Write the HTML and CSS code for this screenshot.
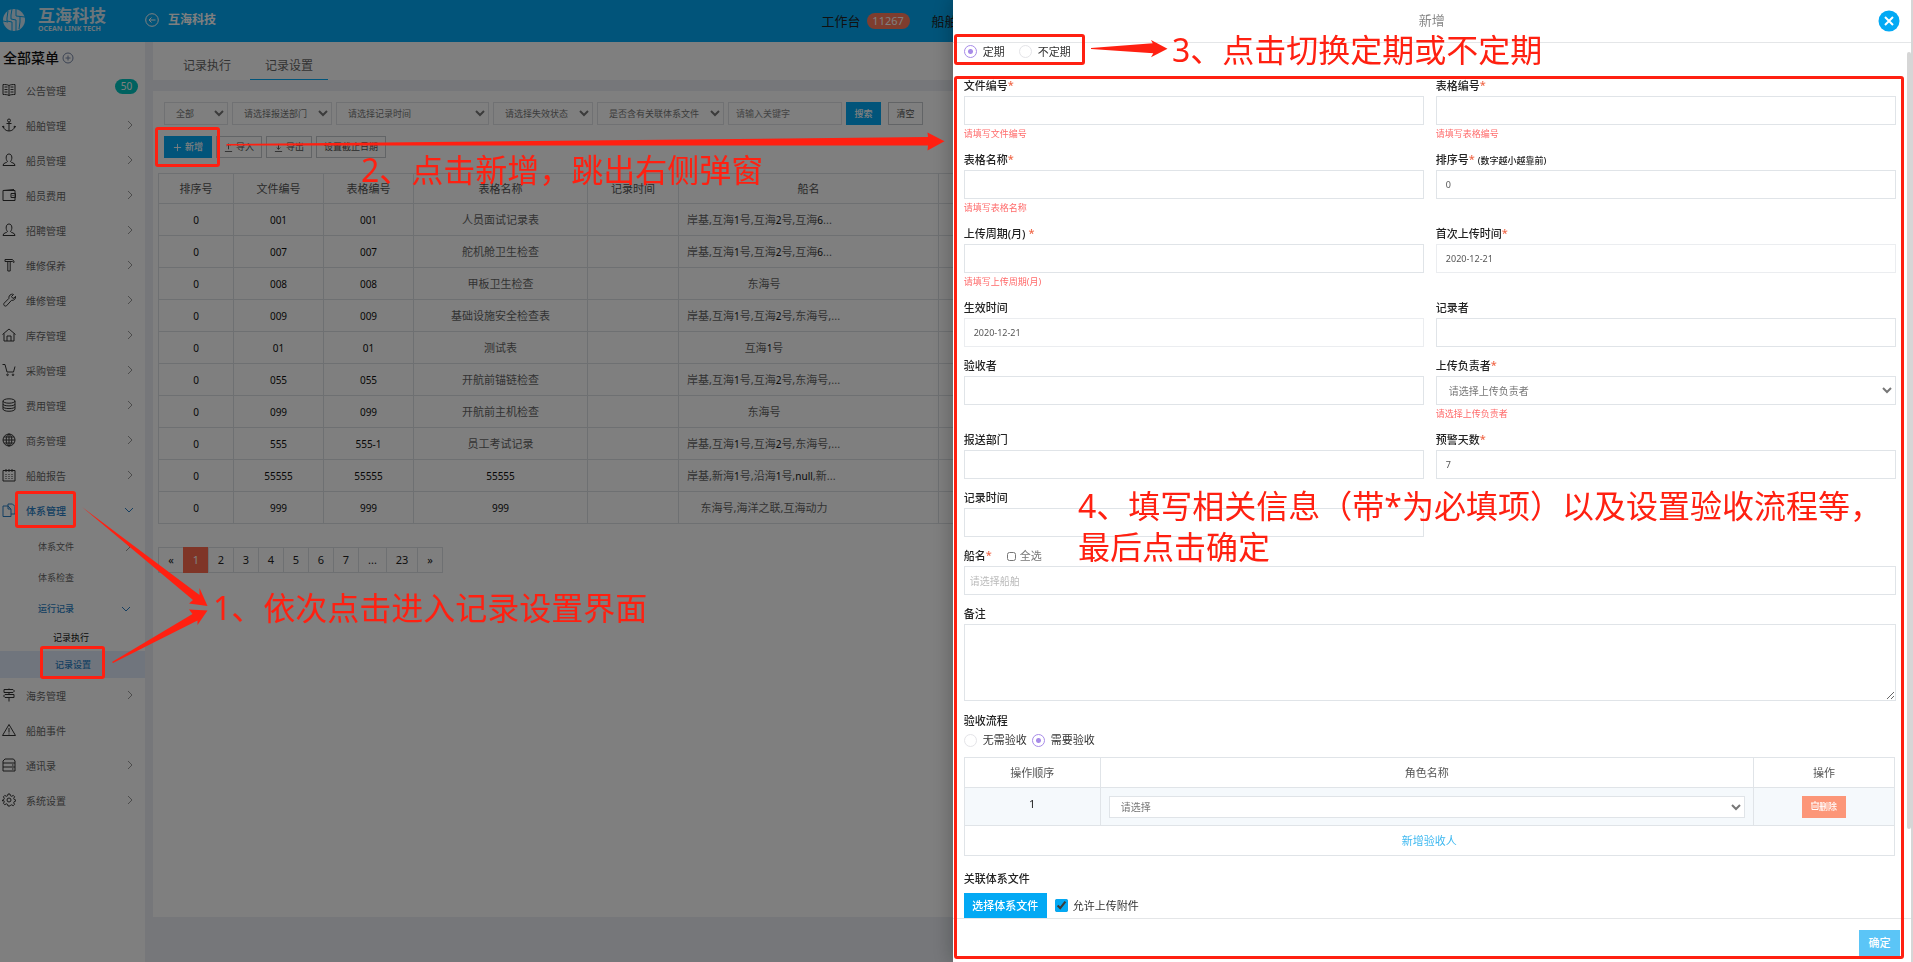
FILE: index.html
```html
<!DOCTYPE html>
<html lang="zh-CN">
<head>
<meta charset="utf-8">
<title>互海科技 - 记录设置</title>
<link rel="stylesheet" href="styles.css">
</head>
<body>
<svg class="sprite" aria-hidden="true">
  <defs>
    <symbol id="i-right" viewBox="0 0 6 10"><path d="M1 1l4 4-4 4"/></symbol>
    <symbol id="i-down" viewBox="0 0 10 6"><path d="M1 1l4 4 4-4"/></symbol>
    <symbol id="i-book" viewBox="0 0 14 14"><path d="M7 2.5C5.500 1.500 3 1.500 1 1.500v10c2 0 4.500 0 6 1 1.500-1 4-1 6-1v-10c-2 0-4.500 0-6 1zM7 2.500v10M2.500 4h3M2.500 6.500h3M2.500 9h3M8.500 4h3M8.500 6.500h3M8.500 9h3"/></symbol>
    <symbol id="i-anchor" viewBox="0 0 14 14"><circle cx="7" cy="2.500" r="1.500"/><path d="M7 4v9M4.500 5.500h5M1 8c.5 3 3 5 6 5s5.500-2 6-5M0 9.500L1 8l1.500 1M11.500 9L13 8l1 1.500"/></symbol>
    <symbol id="i-user" viewBox="0 0 14 14"><path d="M5.500 8.500C3.500 6.500 3.500 1 7 1s3.500 5.500 1.500 7.500c.5 1.500 4.500 1 4.500 4H1c0-3 4-2.500 4.500-4z"/></symbol>
    <symbol id="i-wallet" viewBox="0 0 14 14"><path d="M1 2.500h12v10H1zM1 2.500L12 1.500M9 5.500h4.500v4H9zM10.500 7.500h1"/></symbol>
    <symbol id="i-hammer" viewBox="0 0 14 14"><path d="M3 3.500V1.500h7.500l1.500 2v1l-1.500-1zM5.800 3.500V13h2.400V3.500"/></symbol>
    <symbol id="i-wrench" viewBox="0 0 14 14"><path d="M9 1.500c1-.5 2-.5 2.500 0L9.500 3.500l1 1.500 1.500.3 1.500-2c.5 2.500-1.500 4.500-4 4l-5 5.500c-1.500 1-3.500-.5-2.500-2.500l5-5c-.5-1.500.5-3.300 2-3.800z"/></symbol>
    <symbol id="i-home" viewBox="0 0 14 14"><path d="M.5 6.500L7 1l6.500 5.500M2 5.500V13h10V5.500M5 13V8h4v5"/></symbol>
    <symbol id="i-cart" viewBox="0 0 14 14"><path d="M.5 1.500H3L5 9h6.500L13 3.500"/><circle cx="5.500" cy="11.800" r=".8"/><circle cx="11" cy="11.800" r=".8"/></symbol>
    <symbol id="i-coins" viewBox="0 0 14 14"><ellipse cx="7" cy="3" rx="6" ry="2.200"/><path d="M1 3v8c0 3 12 3 12 0V3M1 6c0 2.500 12 2.500 12 0M1 8.700c0 2.500 12 2.500 12 0"/></symbol>
    <symbol id="i-globe" viewBox="0 0 14 14"><circle cx="7" cy="7" r="6"/><ellipse cx="7" cy="7" rx="2.800" ry="6"/><path d="M1 7h12M2 4h10M2 10h10M7 1v12"/></symbol>
    <symbol id="i-cal" viewBox="0 0 14 14"><path d="M1 2.500h12v10.500H1zM4 1v3M7 1v3M10 1v3M3.500 6.500h1M6.500 6.500h1M9.500 6.500h1M3.500 8.500h1M6.500 8.500h1M9.500 8.500h1M3.500 10.500h1M6.500 10.500h1M9.500 10.500h1"/></symbol>
    <symbol id="i-files" viewBox="0 0 14 14"><path d="M6 3V1h4.500L13 3.500V11H9M1 3h5l3 3v7.500H1zM6 3v3h3"/></symbol>
    <symbol id="i-sign" viewBox="0 0 14 14"><path d="M2 1.500h9L12.500 3 11 4.500H2zM12 6.500H3L1.500 8 3 9.500h9zM7 .5v1M7 4.500v2M7 9.500v4"/></symbol>
    <symbol id="i-warn" viewBox="0 0 14 14"><path d="M7 1.500L13.500 12.500H.5zM7 5v4.500M7 10.500v1"/></symbol>
    <symbol id="i-server" viewBox="0 0 14 14"><path d="M3 1h8.500L13 3v10H1V3zM1 5h12M1 9h12M10 7h1.500M10 11h1.500"/></symbol>
    <symbol id="i-gear" viewBox="0 0 14 14"><circle cx="7" cy="7" r="2"/><path d="M6 1h2l.4 1.700 1.300.6 1.600-.9 1.300 1.400-.9 1.500.5 1.200 1.600.5v1l-1.600.6-.5 1.300.9 1.400-1.400 1.400-1.500-.9-1.300.6L8 13H6l-.4-1.600-1.300-.6-1.500.9-1.400-1.400.9-1.400-.5-1.300L.5 8V7l1.300-.5.5-1.200-.9-1.500 1.400-1.400 1.500.9 1.300-.6z"/></symbol>
  </defs>
</svg>

<div class="app">
  <header class="topbar">
    <div class="brand">
      <svg class="logo" viewBox="0 0 22 22"><circle cx="11" cy="11" r="11"/><path d="M9 0L8 6v4l5 1v11M5 2L4 9v3l5 1v9M13 0v7l9 1M17 7v6l-1 7M0 12l5 1"/></svg>
      <div class="brand-name"><strong>互海科技</strong><small>OCEAN LINK TECH</small></div>
      <svg class="back" viewBox="0 0 14 14"><circle cx="7" cy="7" r="6.300"/><path d="M10.500 7H4M6.500 4.500L4 7l2.500 2.500"/></svg>
      <b class="company">互海科技</b>
    </div>
    <nav class="topnav"><span>工作台</span><span class="count">11267</span><span class="next">船舶</span></nav>
  </header>
  <div class="columns">
    <aside class="sidebar">
      <h2>全部菜单 <svg viewBox="0 0 12 12"><circle cx="6" cy="6" r="5"/><path d="M6 3.500v5M3.500 6h5"/></svg></h2>
      <ul class="menu">
        <li><svg class="ic"><use href="#i-book"/></svg><span>公告管理</span><em>50</em></li>
        <li><svg class="ic"><use href="#i-anchor"/></svg><span>船舶管理</span><svg class="go"><use href="#i-right"/></svg></li>
        <li><svg class="ic"><use href="#i-user"/></svg><span>船员管理</span><svg class="go"><use href="#i-right"/></svg></li>
        <li><svg class="ic"><use href="#i-wallet"/></svg><span>船员费用</span><svg class="go"><use href="#i-right"/></svg></li>
        <li><svg class="ic"><use href="#i-user"/></svg><span>招聘管理</span><svg class="go"><use href="#i-right"/></svg></li>
        <li><svg class="ic"><use href="#i-hammer"/></svg><span>维修保养</span><svg class="go"><use href="#i-right"/></svg></li>
        <li><svg class="ic"><use href="#i-wrench"/></svg><span>维修管理</span><svg class="go"><use href="#i-right"/></svg></li>
        <li><svg class="ic"><use href="#i-home"/></svg><span>库存管理</span><svg class="go"><use href="#i-right"/></svg></li>
        <li><svg class="ic"><use href="#i-cart"/></svg><span>采购管理</span><svg class="go"><use href="#i-right"/></svg></li>
        <li><svg class="ic"><use href="#i-coins"/></svg><span>费用管理</span><svg class="go"><use href="#i-right"/></svg></li>
        <li><svg class="ic"><use href="#i-globe"/></svg><span>商务管理</span><svg class="go"><use href="#i-right"/></svg></li>
        <li><svg class="ic"><use href="#i-cal"/></svg><span>船舶报告</span><svg class="go"><use href="#i-right"/></svg></li>
        <li class="open"><svg class="ic"><use href="#i-files"/></svg><span>体系管理</span><svg class="go wide"><use href="#i-down"/></svg></li>
      </ul>
      <ul class="submenu">
        <li><span>体系文件</span><svg class="go"><use href="#i-right"/></svg></li>
        <li><span>体系检查</span></li>
        <li class="open"><span>运行记录</span><svg class="go wide"><use href="#i-down"/></svg></li>
        <li class="leaf"><span>记录执行</span></li>
        <li class="leaf current"><span>记录设置</span></li>
      </ul>
      <ul class="menu">
        <li><svg class="ic"><use href="#i-sign"/></svg><span>海务管理</span><svg class="go"><use href="#i-right"/></svg></li>
        <li><svg class="ic"><use href="#i-warn"/></svg><span>船舶事件</span></li>
        <li><svg class="ic"><use href="#i-server"/></svg><span>通讯录</span><svg class="go"><use href="#i-right"/></svg></li>
        <li><svg class="ic"><use href="#i-gear"/></svg><span>系统设置</span><svg class="go"><use href="#i-right"/></svg></li>
      </ul>
    </aside>
    <main class="main">
      <nav class="tabs"><a href="#">记录执行</a><a href="#" class="on">记录设置</a></nav>
      <section class="panel">
        <div class="filters">
          <select class="w64" aria-label="范围"><option>全部</option></select>
          <select class="w100" aria-label="报送部门"><option>请选择报送部门</option></select>
          <select class="w153" aria-label="记录时间"><option>请选择记录时间</option></select>
          <select class="w100" aria-label="失效状态"><option>请选择失效状态</option></select>
          <select class="w127" aria-label="关联体系文件"><option>是否含有关联体系文件</option></select>
          <input class="w114" type="text" placeholder="请输入关键字" aria-label="关键字">
          <button class="btn blue search">搜索</button>
          <button class="btn clear">清空</button>
        </div>
        <div class="actions">
          <button class="btn blue"><svg viewBox="0 0 10 10"><path d="M5 1v8M1 5h8"/></svg>新增</button>
          <button class="btn"><svg viewBox="0 0 10 10"><path d="M5 7V1M3 3l2-2 2 2M1 9.500h8"/></svg>导入</button>
          <button class="btn"><svg viewBox="0 0 10 10"><path d="M5 1v6M3 5l2 2 2-2M1 9.500h8"/></svg>导出</button>
          <button class="btn">设置截止日期</button>
        </div>
        <table class="records">
          <colgroup><col class="c75"><col class="c90"><col class="c90"><col class="c174"><col class="c91"><col class="c260"><col></colgroup>
          <thead><tr><th>排序号</th><th>文件编号</th><th>表格编号</th><th>表格名称</th><th>记录时间</th><th>船名</th><th></th></tr></thead>
          <tbody>
            <tr><td>0</td><td>001</td><td>001</td><td class="cn">人员面试记录表</td><td></td><td class="ships"><div class="cut">岸基,互海<i>1</i>号,互海<i>2</i>号,互海<i>6</i>...</div></td><td></td></tr>
            <tr><td>0</td><td>007</td><td>007</td><td class="cn">舵机舱卫生检查</td><td></td><td class="ships"><div class="cut">岸基,互海<i>1</i>号,互海<i>2</i>号,互海<i>6</i>...</div></td><td></td></tr>
            <tr><td>0</td><td>008</td><td>008</td><td class="cn">甲板卫生检查</td><td></td><td class="ships"><div>东海号</div></td><td></td></tr>
            <tr><td>0</td><td>009</td><td>009</td><td class="cn">基础设施安全检查表</td><td></td><td class="ships"><div class="cut">岸基,互海<i>1</i>号,互海<i>2</i>号,东海号,...</div></td><td></td></tr>
            <tr><td>0</td><td>01</td><td>01</td><td class="cn">测试表</td><td></td><td class="ships"><div>互海<i>1</i>号</div></td><td></td></tr>
            <tr><td>0</td><td>055</td><td>055</td><td class="cn">开航前锚链检查</td><td></td><td class="ships"><div class="cut">岸基,互海<i>1</i>号,互海<i>2</i>号,东海号,...</div></td><td></td></tr>
            <tr><td>0</td><td>099</td><td>099</td><td class="cn">开航前主机检查</td><td></td><td class="ships"><div>东海号</div></td><td></td></tr>
            <tr><td>0</td><td>555</td><td>555-1</td><td class="cn">员工考试记录</td><td></td><td class="ships"><div class="cut">岸基,互海<i>1</i>号,互海<i>2</i>号,东海号,...</div></td><td></td></tr>
            <tr><td>0</td><td>55555</td><td>55555</td><td>55555</td><td></td><td class="ships"><div class="cut">岸基,新海<i>1</i>号,沿海<i>1</i>号,<i>null</i>,新...</div></td><td></td></tr>
            <tr><td>0</td><td>999</td><td>999</td><td>999</td><td></td><td class="ships"><div>东海号,海洋之联,互海动力</div></td><td></td></tr>
          </tbody>
        </table>
        <nav class="pager"><a href="#">«</a><a href="#" class="on">1</a><a href="#">2</a><a href="#">3</a><a href="#">4</a><a href="#">5</a><a href="#">6</a><a href="#">7</a><a href="#" class="dots">...</a><a href="#" class="two">23</a><a href="#">»</a></nav>
      </section>
    </main>
  </div>
</div>

<div class="shade"></div>

<form class="drawer">
  <header class="drawer-head">
    <h1>新增</h1>
    <button type="button" class="close" aria-label="关闭"><svg viewBox="0 0 22 22"><circle cx="11" cy="11" r="10.500"/><path d="M7 7l8 8M15 7l-8 8"/></svg></button>
  </header>
  <div class="drawer-body">
    <div class="radios kind">
      <label><input type="radio" name="kind" checked>定期</label>
      <label><input type="radio" name="kind">不定期</label>
    </div>
    <div class="fields">
      <div class="field"><label for="f1">文件编号<sup>*</sup></label><input id="f1" type="text"><p>请填写文件编号</p></div>
      <div class="field"><label for="f2">表格编号<sup>*</sup></label><input id="f2" type="text"><p>请填写表格编号</p></div>
      <div class="field"><label for="f3">表格名称<sup>*</sup></label><input id="f3" type="text"><p>请填写表格名称</p></div>
      <div class="field"><label for="f4">排序号<sup>*</sup> <small>(数字越小越靠前)</small></label><input id="f4" type="text" value="0"></div>
      <div class="field"><label for="f5">上传周期(月) <sup>*</sup></label><input id="f5" type="text"><p>请填写上传周期(月)</p></div>
      <div class="field"><label for="f6">首次上传时间<sup>*</sup></label><input id="f6" class="soft" type="text" value="2020-12-21"></div>
      <div class="field"><label for="f7">生效时间</label><input id="f7" class="soft" type="text" value="2020-12-21"></div>
      <div class="field"><label for="f8">记录者</label><input id="f8" type="text"></div>
      <div class="field"><label for="f9">验收者</label><input id="f9" type="text"></div>
      <div class="field"><label for="f10">上传负责者<sup>*</sup></label><select id="f10"><option>请选择上传负责者</option></select><p>请选择上传负责者</p></div>
      <div class="field"><label for="f11">报送部门</label><input id="f11" type="text"></div>
      <div class="field"><label for="f12">预警天数<sup>*</sup></label><input id="f12" type="text" value="7"></div>
      <div class="field"><label for="f13">记录时间</label><input id="f13" type="text"></div>
      <div class="field full"><div class="ship-label"><label for="f14">船名<sup>*</sup></label><label class="all"><input type="checkbox">全选</label></div><input id="f14" class="ship" type="text" placeholder="请选择船舶"></div>
      <div class="field full"><label for="f15">备注</label><textarea id="f15"></textarea></div>
    </div>
    <h3 class="check-title">验收流程</h3>
    <div class="radios">
      <label><input type="radio" name="check">无需验收</label>
      <label><input type="radio" name="check" checked>需要验收</label>
    </div>
    <table class="flow">
      <colgroup><col class="order"><col><col class="op"></colgroup>
      <thead><tr><th>操作顺序</th><th>角色名称</th><th>操作</th></tr></thead>
      <tbody>
        <tr class="row"><td class="num">1</td><td><select aria-label="角色名称"><option>请选择</option></select></td><td><button type="button" class="del"><svg viewBox="0 0 8 9"><path d="M0 2h8M3 1h2M1 2v6.500h6V2M3 4v3M5 4v3"/></svg>删除</button></td></tr>
        <tr><td colspan="3"><a href="#">新增验收人</a></td></tr>
      </tbody>
    </table>
    <h3 class="rel">关联体系文件</h3>
    <div class="attach"><button type="button" class="pick">选择体系文件</button><label><input type="checkbox" checked>允许上传附件</label></div>
  </div>
  <footer class="drawer-foot"><button type="submit" class="ok">确定</button></footer>
  <div class="thumb"></div>
</form>

<div class="notes">
  <div class="box b1"></div><div class="box b2"></div><div class="box b3"></div><div class="box b4"></div><div class="box b5"></div>
  <svg class="arrows">
    <path d="M82 507L199.500 595V588L207.500 606 189 603.500 193 600z"/>
    <path d="M112 662L192.500 614 189 609.500 207.500 610.500 197.500 625V620.500L113 663z"/>
    <path d="M226.500 144L928 137 927.500 132.500 944.500 141.300 927.500 150.500 928 145.500 226.500 145.500z"/>
    <path d="M1091 48L1152.700 43.300 1151 40 1167.500 48.700 1151 57.300 1153.300 53.300 1091 49z"/>
  </svg>
  <p class="n1">1、依次点击进入记录设置界面</p>
  <p class="n2">2、点击新增，跳出右侧弹窗</p>
  <p class="n3">3、点击切换定期或不定期</p>
  <p class="n4">4、填写相关信息（带*为必填项）以及设置验收流程等，<br>最后点击确定</p>
</div>
</body>
</html>
```
FILE: styles.css
```css
* { box-sizing: border-box; }
body {
  margin: 0;
  height: 100vh;
  overflow: hidden;
  font: 11px/16px "Noto Sans", "Noto Sans CJK SC", sans-serif;
  color: #555;
  background: #eceff5;
}
h1, h2, h3, p, ul { margin: 0; padding: 0; }
ul { list-style: none; }
i { font-style: normal; }
a { color: inherit; text-decoration: none; }
button, input, select, textarea { font: inherit; color: inherit; margin: 0; border-radius: 0; outline: 0; }
svg { fill: none; stroke: currentColor; }
.sprite { position: absolute; width: 0; height: 0; }

/* shell */
.app { height: 100vh; display: flex; flex-direction: column; }
.topbar { height: 42px; flex: none; display: flex; align-items: center; background: #03a9f4; color: #fff; }
.brand { flex: 3; display: flex; align-items: center; padding: 0 0 2px 3px; }
.logo { width: 22px; height: 22px; fill: #cfe8f8; stroke: #03a9f4; stroke-width: 1; }
.logo circle { stroke: none; }
.logo path { fill: none; }
.brand-name { margin-left: 13px; width: 67px; display: flex; flex-direction: column; gap: 1px; color: #d8eaf5; }
.brand-name strong { font-size: 17px; line-height: 16px; white-space: nowrap; }
.brand-name small { font-size: 7px; line-height: 7px; font-weight: 700; white-space: nowrap; }
.back { width: 14px; height: 14px; margin-left: 40px; }
.company { margin-left: 9px; font-size: 12px; }
.topnav { flex: 4; display: flex; align-items: center; font-size: 13px; color: #222; white-space: nowrap; }
.count { margin-left: 6px; width: 43px; height: 16px; border-radius: 8px; background: #ff7a5c; color: #fff; font-size: 11px; text-align: center; }
.next { margin-left: 22px; }
.columns { flex: 1; min-height: 0; display: flex; }

/* sidebar */
.sidebar { width: 145px; flex: none; background: #fff; font-size: 10px; color: #666; }
.sidebar h2 { height: 31px; display: flex; align-items: center; gap: 3px; padding-left: 3px; font-size: 14px; font-weight: 500; color: #111; }
.sidebar h2 svg { width: 12px; height: 12px; color: #7888a8; }
.menu li { height: 35px; display: flex; align-items: center; padding: 0 12px 0 2px; }
.ic { width: 14px; height: 14px; margin: 0 10px 2px 0; color: #333; flex: none; }
.go { width: 6px; height: 10px; margin-left: auto; color: #999; }
.menu .go { margin-bottom: 2px; }
.go.wide { width: 10px; height: 6px; }
.menu .go.wide { margin-right: -1px; }
.menu em { margin: 0 -5px 8px auto; width: 23px; height: 15px; border-radius: 8px; background: #00c4c0; color: #fff; font-style: normal; line-height: 15px; text-align: center; }
.menu .open, .submenu .open, .submenu .current, .open .ic, .open .go { color: #2a7fc4; }
.menu .open, .submenu .open, .submenu .current { font-weight: 500; }
.submenu { padding-top: 3px; font-size: 9px; }
.submenu li { height: 31px; display: flex; align-items: center; padding: 0 14px 0 38px; }
.submenu li.leaf { height: 27px; padding-left: 53px; color: #111; }
.submenu li.current { padding-left: 55px; color: #2a7fc4; background: #e0ebfb; }

/* content */
.main { flex: 1; min-width: 0; margin-left: 8px; display: flex; flex-direction: column; }
.tabs { height: 38px; flex: none; display: flex; gap: 4px; padding-left: 15px; background: #fff; font-size: 12px; color: #666; }
.tabs a { width: 78px; line-height: 48px; height: 38px; text-align: center; }
.tabs .on { border-bottom: 1px solid #03a9f4; }
.panel { flex: 1; margin: 11px 0 45px; padding: 11px 5px 0; background: #fff; }
.filters { display: flex; padding-left: 6px; gap: 4px; font-size: 9px; color: #777; }
.filters select, .filters input { height: 23px; border: 1px solid #e0e3e6; background: transparent; }
.filters select { padding: 0 2px 0 7px; }
.filters input { padding: 0 7px; }
.filters input::placeholder { color: #888; }
.w64 { width: 64px; } .w100 { width: 100px; } .w153 { width: 153px; } .w127 { width: 127px; } .w114 { width: 114px; }
.btn { height: 22px; padding: 0 7px; display: flex; align-items: center; justify-content: center; gap: 3px; border: 1px solid #c4c8cc; background: transparent; font-size: 9px; color: #555; white-space: nowrap; }
.btn svg { width: 9px; height: 9px; }
.btn.blue { border-color: #03a9f4; background: #03a9f4; color: #fff; font-weight: 500; }
.search, .clear { width: 35px; height: 23px; padding: 0; }
.clear { margin-left: 3px; }
.actions { display: flex; gap: 4px; margin-top: 11px; padding-left: 6px; }
.actions .blue { width: 48px; }
.records { width: 100%; margin-top: 15px; border-collapse: collapse; table-layout: fixed; text-align: center; }
.c75 { width: 75px; } .c90 { width: 90px; } .c174 { width: 174px; } .c91 { width: 91px; } .c260 { width: 260px; }
.records th, .records td { height: 32px; padding: 0; border: 1px solid #dde1e5; }
.records th { height: 30px; font-weight: 400; }
.records td { font-size: 10px; color: #111; }
.records td.cn { font-size: 11px; color: #666; }
.records .ships { padding: 0 8px; color: #666; }
.ships div { width: 154px; font-size: 11px; white-space: nowrap; }
.ships i { font-size: 10px; color: #111; }
.ships .cut { text-align: left; }
.pager { display: flex; margin-top: 23px; color: #222; }
.pager a { width: 25px; height: 26px; line-height: 24px; text-align: center; border: 1px solid #dde1e5; border-right-width: 0; }
.pager a:last-child { width: 26px; border-right-width: 1px; }
.pager .dots { width: 28px; } .pager .two { width: 31px; }
.pager .on { border-color: #ff6a4e; background: #ff6a4e; color: #fff; }

.shade { position: fixed; inset: 0; background: rgba(0, 0, 0, .5); }

/* drawer */
.drawer { position: fixed; top: 0; right: 0; bottom: 0; width: 50.2%; display: flex; flex-direction: column; background: #fff; border-right: 2px solid #d6d6d6; box-shadow: 0 0 20px rgba(0, 0, 0, .3); color: #333; }
.drawer-head { height: 43px; flex: none; display: flex; align-items: center; border-bottom: 1px solid #e4e6e8; padding: 0 11px; }
.drawer-head h1 { flex: 1; padding: 0 0 2px 22px; font-size: 13px; font-weight: 400; color: #888; text-align: center; }
.close { width: 22px; height: 22px; padding: 0; border: 0; background: none; }
.close svg { display: block; width: 22px; height: 22px; fill: #03a9f4; stroke: #fff; stroke-width: 2; }
.close circle { stroke: none; }
.drawer-body { flex: 1; min-height: 0; overflow: hidden; padding: 0 15px 0 11px; }
.radios { display: flex; align-items: center; gap: 5px; height: 18px; }
.radios.kind { height: 34px; gap: 14px; padding-bottom: 17px; }
.radios label, .attach label, .all { display: flex; align-items: center; }
.radios input { appearance: none; width: 13px; height: 13px; margin-right: 6px; border: 1px solid #e4e4e8; border-radius: 50%; background: #fff; }
.radios input:checked { border-color: #a78be8; background: radial-gradient(circle, #a78be8 2px, #fff 3px); }
.fields { display: grid; grid-template-columns: 1fr 1fr; column-gap: 12px; }
.field { padding-bottom: 10px; }
.full { grid-column: 1 / -1; }
.field > label, .ship-label, .drawer h3 { display: block; height: 19px; line-height: 18px; font-size: 11px; font-weight: 500; color: #222; }
sup { color: #f0694a; font-size: 11px; line-height: 1px; vertical-align: 1px; }
.field small { font-size: 9px; }
.field > input, .field > select, .field textarea { display: block; width: 100%; height: 29px; padding: 0 9px; border: 1px solid #e0e4e8; background: #fff; font-size: 9px; color: #555; }
.field > input.soft { border-color: #ebedf0; }
.field > select { padding: 0 4px 0 8px; font-size: 10px; color: #777; }
.field textarea { height: 77px; }
.field p { height: 16px; line-height: 18px; font-size: 9px; color: #ff6b6b; }
.ship-label { display: flex; gap: 15px; }
.all { height: 18px; font-weight: 400; color: #777; }
.all input { width: 9px; height: 9px; margin-right: 4px; }
.field > input.ship { padding: 0 5px; font-size: 10px; }
.ship::placeholder { color: #bbb; }
.drawer h3.check-title { margin-top: 1px; }
.flow { width: calc(100% - 1px); margin-top: 8px; border-collapse: collapse; table-layout: fixed; text-align: center; color: #555; }
.order { width: 136px; } .op { width: 141px; }
.flow th, .flow td { height: 30px; padding: 0 8px; border: 1px solid #e0e4e8; font-weight: 400; }
.flow .row td { height: 38px; background: #f5f9fc; }
.flow .row .num { padding-bottom: 6px; color: #222; }
.flow select { display: block; width: 100%; height: 22px; padding: 0 4px 0 7px; border: 1px solid #e0e4e8; background: #fff; font-size: 10px; color: #777; }
.flow a { color: #3db8f0; }
.del { height: 22px; width: 44px; padding: 0; border: 0; background: #fc9678; color: #fff; font-size: 9px; font-weight: 500; }
.del svg { width: 8px; height: 9px; }
.drawer h3.rel { margin-top: 14px; }
.attach { display: flex; gap: 8px; padding-top: 4px; }
.pick { width: 83px; height: 25px; padding: 0; border: 0; background: #03a9f4; color: #fff; font-weight: 500; }
.attach input { width: 13px; height: 13px; margin-right: 5px; accent-color: #03a9f4; }
.drawer-foot { height: 44px; flex: none; display: flex; justify-content: flex-end; padding: 11px 11px 0; border-top: 1px solid #e4e6e8; }
.ok { width: 41px; height: 26px; padding: 0; border: 0; background: #5bc5f7; color: #fff; font-weight: 500; }
.thumb { position: absolute; top: 52px; right: 0; width: 4px; height: 777px; border-radius: 2px; background: #d6d6d6; }

/* annotations drawn over the page */
.notes { position: fixed; inset: 0; pointer-events: none; color: #ff2011; }
.box { position: absolute; border: 3px solid #ff2011; border-radius: 3px; }
.b1 { left: 15px; top: 491px; width: 61px; height: 37px; }
.b2 { left: 40px; top: 646px; width: 65px; height: 33px; }
.b3 { left: 155px; top: 127px; width: 65px; height: 40px; }
.b4 { left: 954px; top: 34px; width: 131px; height: 31px; }
.b5 { left: 954px; top: 76px; width: 950px; height: 883px; }
.arrows { position: absolute; width: 100%; height: 100%; fill: #ff2011; stroke: none; }
.notes p { position: absolute; font-size: 32px; line-height: 41px; font-weight: 400; white-space: nowrap; }
.n1 { left: 213px; top: 587px; }
.n2 { left: 361px; top: 149px; }
.n3 { left: 1172px; top: 29px; }
.n4 { left: 1078px; top: 485px; }
```
